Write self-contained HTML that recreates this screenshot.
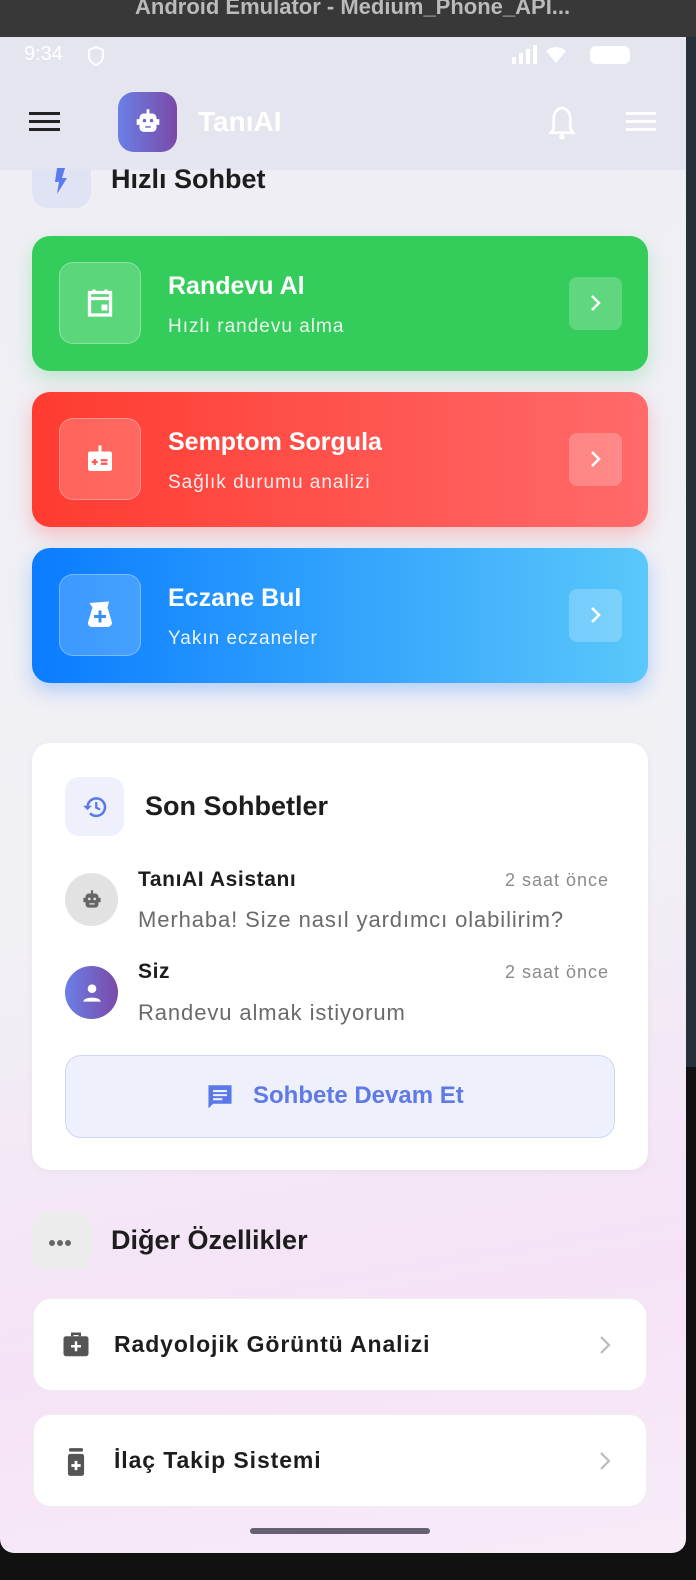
<!DOCTYPE html>
<html><head><meta charset="utf-8"><style>
*{margin:0;padding:0;box-sizing:border-box}
body{width:696px;height:1580px;overflow:hidden;background:#111;font-family:"Liberation Sans",sans-serif;position:relative}
.a{position:absolute;white-space:nowrap}
#topbar{left:0;top:0;width:696px;height:37px;background:#383838}
#right{left:686px;top:37px;width:10px;height:1030px;background:#263038}
#screen{left:0;top:37px;width:686px;height:1516px;border-radius:0 0 14px 14px;overflow:hidden;background:linear-gradient(170deg,#eeeef4 0%,#f1f0f5 55%,#f5e2f6 82%,#f7ecf8 100%)}
.card{border-radius:18px}
.wt{color:#fff;font-weight:bold}
.sub{font-size:19px;letter-spacing:1px}
.ib{border-radius:14px;border:1px solid rgba(255,255,255,.3);background:rgba(255,255,255,.2)}
.arr{border-radius:8px;background:rgba(255,255,255,.22)}
.white{background:#fff;border-radius:18px}
.h{font-size:27px;color:#1d1d1d;font-weight:bold}
</style></head><body>
<div class="a" id="topbar"><div class="a" style="left:135px;top:-6px;color:#bbb;font-size:22px;font-weight:bold">Android Emulator - Medium_Phone_API...</div></div>
<div class="a" id="right"></div>
<div class="a" id="screen">
 <div class="a" style="left:0;top:0;width:686px;height:133px;background:#e4e5ee"></div>
 <div class="a" style="left:24px;top:6px;color:#fff;font-size:20px">9:34</div>
 <svg class="a" style="left:86px;top:8px" width="20" height="22" viewBox="0 0 20 22"><path d="M10 2 L17 5 V11 C17 16 13 19 10 20 C7 19 3 16 3 11 V5 Z" fill="none" stroke="#fff" stroke-width="2"/></svg>
 <svg class="a" style="left:512px;top:8px" width="120" height="20"><rect x="0" y="12" width="4" height="7" fill="#fff"/><rect x="7" y="8" width="4" height="11" fill="#fff"/><rect x="14" y="4" width="4" height="15" fill="#fff"/><rect x="21" y="0" width="4" height="19" fill="#fff"/><path d="M44 18 L34 6 A15 15 0 0 1 54 6 Z" fill="#fff"/><rect x="78" y="1" width="40" height="18" rx="6" fill="#fff"/></svg>
 <div class="a" style="left:29px;top:75px;width:31px;height:3px;background:#222;box-shadow:0 8px 0 #222,0 16px 0 #222"></div>
 <div class="a" style="left:118px;top:55px;width:59px;height:60px;border-radius:16px;background:linear-gradient(90deg,#6a7fe6,#7a4aa8)"></div>
 <svg class="a" style="left:131px;top:68px" width="34" height="34" viewBox="0 0 24 24"><rect x="11" y="3" width="2" height="3" fill="#fff"/><rect x="6" y="6" width="12" height="13" rx="3" fill="#fff"/><rect x="4" y="10" width="2" height="4" fill="#fff"/><rect x="18" y="10" width="2" height="4" fill="#fff"/><circle cx="9.5" cy="11" r="1.2" fill="#7064c4"/><circle cx="14.5" cy="11" r="1.2" fill="#7064c4"/><rect x="10" y="15" width="4" height="1" fill="#7064c4"/></svg>
 <div class="a" style="left:198px;top:69px;color:#fff;font-size:28px;font-weight:bold">TanıAI</div>
 <svg class="a" style="left:545px;top:68px" width="34" height="36" viewBox="0 0 24 26"><path d="M12 2 C8 3 6 6 6 10 V17 L4 20 H20 L18 17 V10 C18 6 16 3 12 2 Z" fill="none" stroke="#fff" stroke-width="2"/><circle cx="12" cy="23" r="2" fill="#fff"/></svg>
 <div class="a" style="left:626px;top:75px;width:30px;height:3px;background:#fff;box-shadow:0 8px 0 #fff,0 16px 0 #fff"></div>
 <div class="a" style="left:32px;top:133px;width:59px;height:38px;background:#e0e3f4;border-radius:0 0 16px 16px"></div>
 <svg class="a" style="left:51px;top:131px" width="20" height="30" viewBox="0 0 20 30"><path d="M6 0 H14 L11 10 H16 L6 26 L8 14 H4 Z" fill="#5a7af0"/></svg>
 <div class="a h" style="left:111px;top:127px">Hızlı Sohbet</div>

 <div class="a card" style="left:32px;top:199px;width:616px;height:135px;background:#34cc5a;box-shadow:0 8px 18px rgba(52,200,90,.25)"></div>
 <div class="a ib" style="left:59px;top:225px;width:82px;height:82px"></div>
 <svg class="a" style="left:82px;top:248px" width="36" height="36" viewBox="0 0 24 24"><path d="M5 5 H19 V20 H5 Z M5 9 H19" fill="none" stroke="#fff" stroke-width="2.2"/><rect x="7" y="3" width="2" height="3" fill="#fff"/><rect x="15" y="3" width="2" height="3" fill="#fff"/><rect x="13" y="13" width="4" height="4" fill="#fff"/></svg>
 <div class="a wt" style="left:168px;top:235px;font-size:25px">Randevu Al</div>
 <div class="a sub" style="left:168px;top:279px;color:#eafaee">Hızlı randevu alma</div>
 <div class="a arr" style="left:569px;top:240px;width:53px;height:53px"></div>
 <svg class="a" style="left:583px;top:254px" width="24" height="24"><path d="M9 5 L16 12 L9 19" fill="none" stroke="#fff" stroke-width="2.5"/></svg>

 <div class="a card" style="left:32px;top:355px;width:616px;height:135px;background:linear-gradient(90deg,#ff3b30,#ff6a6a);box-shadow:0 8px 18px rgba(255,80,80,.3)"></div>
 <div class="a ib" style="left:59px;top:381px;width:82px;height:82px"></div>
 <svg class="a" style="left:82px;top:404px" width="36" height="36" viewBox="0 0 24 24"><rect x="11" y="3" width="2" height="5" fill="#fff"/><rect x="4" y="7" width="16" height="13" rx="1.5" fill="#fff"/><path d="M6.5 14 H10.5 M8.5 12 V16 M12.5 12.8 H17 M12.5 15.2 H17" stroke="#ff5a55" stroke-width="1.5"/></svg>
 <div class="a wt" style="left:168px;top:391px;font-size:25px">Semptom Sorgula</div>
 <div class="a sub" style="left:168px;top:435px;color:#ffecec">Sağlık durumu analizi</div>
 <div class="a arr" style="left:569px;top:396px;width:53px;height:53px"></div>
 <svg class="a" style="left:583px;top:410px" width="24" height="24"><path d="M9 5 L16 12 L9 19" fill="none" stroke="#fff" stroke-width="2.5"/></svg>

 <div class="a card" style="left:32px;top:511px;width:616px;height:135px;background:linear-gradient(90deg,#0a7cff,#5ac8fa);box-shadow:0 8px 18px rgba(40,130,255,.3)"></div>
 <div class="a ib" style="left:59px;top:537px;width:82px;height:82px"></div>
 <svg class="a" style="left:82px;top:560px" width="36" height="36" viewBox="0 0 24 24"><path d="M5 4 L18 3 L17 7 L20 17 C20 19 18 20 17 20 H7 C5 20 4 19 4 17 L7 7 Z" fill="#fff"/><path d="M12 9 V17 M8 13 H16" stroke="#3a8ef8" stroke-width="2"/></svg>
 <div class="a wt" style="left:168px;top:547px;font-size:25px">Eczane Bul</div>
 <div class="a sub" style="left:168px;top:591px;color:#eaf4ff">Yakın eczaneler</div>
 <div class="a arr" style="left:569px;top:552px;width:53px;height:53px"></div>
 <svg class="a" style="left:583px;top:566px" width="24" height="24"><path d="M9 5 L16 12 L9 19" fill="none" stroke="#fff" stroke-width="2.5"/></svg>

 <div class="a white" style="left:32px;top:706px;width:616px;height:427px;box-shadow:0 2px 8px rgba(0,0,0,.04)"></div>
 <div class="a" style="left:65px;top:740px;width:59px;height:59px;border-radius:14px;background:#eef0fc"></div>
 <svg class="a" style="left:80px;top:755px" width="30" height="30" viewBox="0 0 24 24"><path d="M6 12 A7 7 0 1 1 8 17" fill="none" stroke="#5a78ea" stroke-width="2"/><path d="M2.5 11 L6 14.5 L9.5 11 Z" fill="#5a78ea"/><path d="M13 8 V12.5 L16 14" fill="none" stroke="#5a78ea" stroke-width="1.8"/></svg>
 <div class="a h" style="left:145px;top:754px">Son Sohbetler</div>
 <div class="a" style="left:65px;top:836px;width:53px;height:53px;border-radius:50%;background:#e2e2e2"></div>
 <svg class="a" style="left:79px;top:850px" width="26" height="26" viewBox="0 0 24 24"><rect x="11" y="3" width="2" height="3" fill="#666"/><rect x="6" y="6" width="12" height="13" rx="3" fill="#666"/><rect x="4" y="10" width="2" height="4" fill="#666"/><rect x="18" y="10" width="2" height="4" fill="#666"/><circle cx="9.5" cy="11" r="1.2" fill="#e2e2e2"/><circle cx="14.5" cy="11" r="1.2" fill="#e2e2e2"/><rect x="9.5" y="15" width="5" height="1.2" fill="#e2e2e2"/></svg>
 <div class="a" style="left:138px;top:831px;font-size:21px;letter-spacing:.6px;font-weight:bold;color:#1d1d1d">TanıAI Asistanı</div>
 <div class="a" style="left:505px;top:833px;font-size:18px;letter-spacing:1px;color:#8a8a8a">2 saat önce</div>
 <div class="a" style="left:138px;top:870px;font-size:22px;letter-spacing:.9px;color:#6a6a6a">Merhaba! Size nasıl yardımcı olabilirim?</div>
 <div class="a" style="left:65px;top:929px;width:53px;height:53px;border-radius:50%;background:linear-gradient(90deg,#6a7fe6,#7a4aa8)"></div>
 <svg class="a" style="left:79px;top:943px" width="26" height="26" viewBox="0 0 24 24"><circle cx="12" cy="8" r="4" fill="#fff"/><path d="M4 20 C4 15 20 15 20 20 Z" fill="#fff"/></svg>
 <div class="a" style="left:138px;top:923px;font-size:21px;letter-spacing:.6px;font-weight:bold;color:#1d1d1d">Siz</div>
 <div class="a" style="left:505px;top:925px;font-size:18px;letter-spacing:1px;color:#8a8a8a">2 saat önce</div>
 <div class="a" style="left:138px;top:963px;font-size:22px;letter-spacing:.9px;color:#6a6a6a">Randevu almak istiyorum</div>
 <div class="a" style="left:65px;top:1018px;width:550px;height:83px;border-radius:16px;background:#eef0fc;border:1.5px solid #cdd6f8"></div>
 <svg class="a" style="left:206px;top:1046px" width="28" height="30" viewBox="0 0 24 26"><path d="M2 2 H22 V18 H6 L2 22 Z" fill="#5a78ea"/><path d="M6 7 H18 M6 10.5 H18 M6 14 H14" stroke="#eef0fc" stroke-width="1.8"/></svg>
 <div class="a" style="left:253px;top:1045px;font-size:24px;color:#5f7ae6;font-weight:bold">Sohbete Devam Et</div>

 <div class="a" style="left:32px;top:1175px;width:59px;height:59px;border-radius:16px;background:#ececec"></div>
 <div class="a" style="left:49px;top:1203px;width:6px;height:6px;border-radius:50%;background:#666;box-shadow:8px 0 0 #666,16px 0 0 #666"></div>
 <div class="a h" style="left:111px;top:1188px">Diğer Özellikler</div>
 <div class="a white" style="left:33px;top:1261px;width:614px;height:93px;border:1px solid #eee"></div>
 <svg class="a" style="left:61px;top:1293px" width="30" height="30" viewBox="0 0 24 24"><path d="M9 5 V3 H15 V5" fill="none" stroke="#555" stroke-width="2"/><rect x="2" y="5" width="20" height="16" rx="2" fill="#555"/><path d="M12 9 V17 M8 13 H16" stroke="#fff" stroke-width="2"/></svg>
 <div class="a" style="left:114px;top:1294px;font-size:23px;letter-spacing:.9px;color:#1d1d1d;font-weight:bold">Radyolojik Görüntü Analizi</div>
 <svg class="a" style="left:596px;top:1296px" width="20" height="24"><path d="M5 4 L13 12 L5 20" fill="none" stroke="#bbb" stroke-width="2.2"/></svg>
 <div class="a white" style="left:33px;top:1377px;width:614px;height:93px;border:1px solid #eee"></div>
 <svg class="a" style="left:62px;top:1410px" width="28" height="30" viewBox="0 0 24 26"><rect x="6" y="1" width="12" height="3" rx="1" fill="#555"/><rect x="5" y="6" width="14" height="19" rx="2" fill="#555"/><path d="M12 12 V20 M8 16 H16" stroke="#fff" stroke-width="2.4"/></svg>
 <div class="a" style="left:114px;top:1410px;font-size:23px;letter-spacing:.9px;color:#1d1d1d;font-weight:bold">İlaç Takip Sistemi</div>
 <svg class="a" style="left:596px;top:1412px" width="20" height="24"><path d="M5 4 L13 12 L5 20" fill="none" stroke="#bbb" stroke-width="2.2"/></svg>
 <div class="a" style="left:250px;top:1491px;width:180px;height:6px;border-radius:3px;background:#666070"></div>
</div>
</body></html>
